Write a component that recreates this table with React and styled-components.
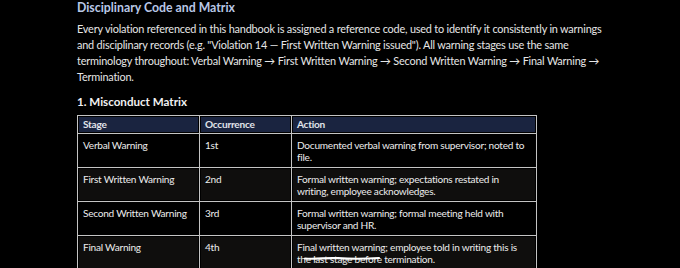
import React from "react";
import styled, { createGlobalStyle } from "styled-components";

const GlobalStyle = createGlobalStyle`
  html, body {
    margin: 0;
    padding: 0;
    background: #000;
  }
  body {
    font-family: "Lato", "Open Sans", sans-serif;
    color: #e4e4e4;
  }
`;

const Page = styled.div`
  width: 680px;
  height: 268px;
  overflow: hidden;
  padding: 0 0 0 77px;
  box-sizing: border-box;
`;

const Title = styled.h2`
  margin: 0;
  font-size: 12.3px;
  line-height: 15px;
  font-weight: 700;
  color: #b9c7e6;
`;

const Intro = styled.p`
  margin: 6px 0 0;
  font-size: 10.9px;
  letter-spacing: -0.2px;
  line-height: 16px;
  color: #e6e6e6;
  white-space: nowrap;
`;

const SubTitle = styled.h3`
  margin: 10px 0 0;
  font-size: 11.6px;
  line-height: 14px;
  font-weight: 700;
  color: #f2f2f2;
`;

const Table = styled.table`
  margin-top: 6px;
  width: 459px;
  border-collapse: collapse;
  table-layout: fixed;
  font-size: 10.1px;
  letter-spacing: -0.25px;
  line-height: 12px;
`;

const Th = styled.th`
  box-sizing: border-box;
  width: ${(p) => p.$w}px;
  text-align: left;
  font-weight: 700;
  color: #e0e3ea;
  background: #1a2440;
  border: 1px solid #c4c4c4;
  box-shadow: inset 0 0 0 1px #000;
  padding: 2px 5px 3px;
`;

const Td = styled.td`
  position: relative;
  vertical-align: top;
  color: #ececec;
  background: ${(p) => (p.$shade ? "#0f0e0d" : "#000")};
  border: 1px solid #c4c4c4;
  box-shadow: inset 0 0 0 1px #000;
  padding: 5px 5px 4px;
  height: 24px;
`;

const Scribble = styled.svg`
  position: absolute;
  left: 12px;
  top: 19px;
  width: 76px;
  height: 6px;
`;

const rows = [
  ["Verbal Warning", "1st", "Documented verbal warning from supervisor; noted to file."],
  ["First Written Warning", "2nd", "Formal written warning; expectations restated in writing, employee acknowledges."],
  ["Second Written Warning", "3rd", "Formal written warning; formal meeting held with supervisor and HR."],
  ["Final Warning", "4th", "Final written warning; employee told in writing this is the last stage before termination."],
];

export default function App() {
  return (
    <Page>
      <GlobalStyle />
      <Title>Disciplinary Code and Matrix</Title>
      <Intro>
        Every violation referenced in this handbook is assigned a reference code, used to identify it consistently in warnings
        <br />
        and disciplinary records (e.g. "Violation 14 — First Written Warning issued"). All warning stages use the same
        <br />
        terminology throughout: Verbal Warning → First Written Warning → Second Written Warning → Final Warning →
        <br />
        Termination.
      </Intro>
      <SubTitle>1. Misconduct Matrix</SubTitle>
      <Table>
        <thead>
          <tr>
            <Th $w={122}>Stage</Th>
            <Th $w={92}>Occurrence</Th>
            <Th $w={245}>Action</Th>
          </tr>
        </thead>
        <tbody>
          {rows.map((r, i) => (
            <tr key={i}>
              <Td $shade={i % 2 === 1}>{r[0]}</Td>
              <Td $shade={i % 2 === 1}>{r[1]}</Td>
              <Td $shade={i % 2 === 1}>
                {r[2]}
                {i === 3 && (
                  <Scribble viewBox="0 0 76 6">
                    <path
                      d="M1 3.5 C 12 4.5, 22 2.5, 34 3.2 S 58 4.2, 75 3"
                      stroke="#fff"
                      strokeWidth="2.2"
                      fill="none"
                      strokeLinecap="round"
                    />
                  </Scribble>
                )}
              </Td>
            </tr>
          ))}
        </tbody>
      </Table>
    </Page>
  );
}
